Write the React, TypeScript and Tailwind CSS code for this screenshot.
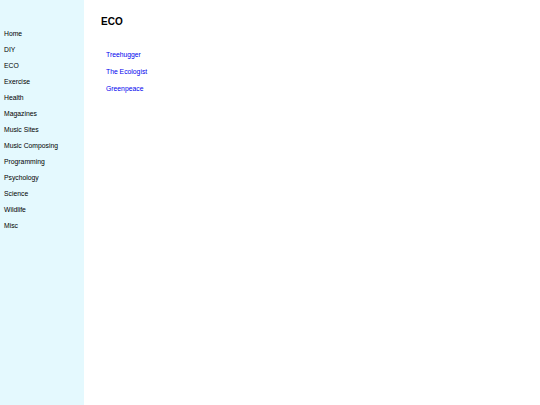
const topics = [
  "Home",
  "DIY",
  "ECO",
  "Exercise",
  "Health",
  "Magazines",
  "Music Sites",
  "Music Composing",
  "Programming",
  "Psychology",
  "Science",
  "Wildlife",
  "Misc",
];

const links = ["Treehugger", "The Ecologist", "Greenpeace"];

export default function App() {
  return (
    <div className="flex h-[405px] w-[540px] bg-white font-['Liberation_Sans',Arial,sans-serif] text-black">
      {/* SIDEBAR */}
      <nav className="flex w-[84px] shrink-0 flex-col bg-[#e4f9fe] pt-[26px]">
        {topics.map((t) => (
          <a key={t} className="block h-[16px] pl-[4px] text-[6.8px] leading-[16px] text-black">
            {t}
          </a>
        ))}
      </nav>
      {/* CONTENT */}
      <main className="flex-1 pl-[17px] pt-[15px]">
        <h2 className="text-[10px] font-bold leading-[14px]">ECO</h2>
        <ul className="mt-[17px] flex flex-col pl-[5px]">
          {links.map((l) => (
            <li key={l} className="h-[17px] text-[6.8px] leading-[17px]">
              <a className="text-[#0000ee]">{l}</a>
            </li>
          ))}
        </ul>
      </main>
    </div>
  );
}
